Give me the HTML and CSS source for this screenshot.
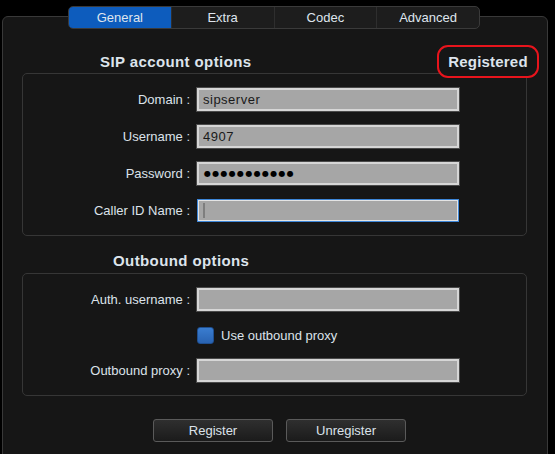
FILE: index.html
```html
<!DOCTYPE html>
<html>
<head>
<meta charset="utf-8">
<link rel="stylesheet" href="styles.css">
</head>
<body>
<div class="app">
  <nav class="tabs">
    <div class="tab active">General</div>
    <div class="tab">Extra</div>
    <div class="tab">Codec</div>
    <div class="tab">Advanced</div>
  </nav>
  <div class="panel">
    <div class="head-row">
      <h2 class="heading sip">SIP account options</h2>
      <div class="status">Registered</div>
    </div>
    <section class="group">
      <div class="row"><label class="lbl">Domain :</label><input class="field" value="sipserver" readonly></div>
      <div class="row"><label class="lbl">Username :</label><input class="field" value="4907" readonly></div>
      <div class="row"><label class="lbl">Password :</label><div class="field dots">●●●●●●●●●●●</div></div>
      <div class="row"><label class="lbl">Caller ID Name :</label><div class="field focus"><span class="caret"></span></div></div>
    </section>
    <h2 class="heading outbound">Outbound options</h2>
    <section class="group">
      <div class="row"><label class="lbl">Auth. username :</label><div class="field"></div></div>
      <div class="row check-row"><span class="lbl"></span><span class="checkbox"></span><span class="check-label">Use outbound proxy</span></div>
      <div class="row"><label class="lbl">Outbound proxy :</label><div class="field"></div></div>
    </section>
    <div class="buttons">
      <button class="btn">Register</button>
      <button class="btn">Unregister</button>
    </div>
  </div>
</div>
</body>
</html>
```

FILE: styles.css
```css
* { box-sizing: border-box; }
html, body { margin: 0; padding: 0; background: #000; }
body {
  width: 555px;
  height: 454px;
  overflow: hidden;
  font-family: "Liberation Sans", Arial, sans-serif;
  color: #dce2ea;
}
.app { padding-top: 6px; }
.tabs {
  position: relative;
  z-index: 2;
  display: flex;
  margin-left: 68px;
  width: 412px;
  height: 23px;
  background: #1d1d1d;
  border: 1px solid #3a3a3a;
  border-radius: 5px;
  overflow: hidden;
}
.tab {
  flex: 1;
  display: flex;
  align-items: center;
  justify-content: center;
  font-size: 13px;
  color: #dfe5ee;
  border-left: 1px solid #2e2e2e;
}
.tab:first-child { border-left: none; }
.tab.active { background: #0d5cbd; }
.panel {
  margin-top: -13px;
  margin-left: 2px;
  width: 546px;
  height: 460px;
  background: #161616;
  border: 1px solid #393939;
  border-radius: 6px;
}
.head-row {
  display: flex;
  justify-content: space-between;
  align-items: flex-start;
  height: 28px;
  margin-top: 28px;
}
.heading {
  margin: 0;
  font-size: 15px;
  font-weight: bold;
  line-height: 18px;
  letter-spacing: 0.4px;
  color: #dde4ec;
}
.heading.sip { margin-top: 8px; margin-left: 97px; }
.status {
  position: relative;
  z-index: 1;
  margin-right: 8px;
  width: 102px;
  height: 33px;
  border: 2px solid #e8141c;
  border-radius: 11px;
  background: #161616;
  font-size: 15px;
  font-weight: bold;
  line-height: 29px;
  letter-spacing: 0.2px;
  text-align: center;
  color: #dde4ec;
}
.group {
  margin-left: 19px;
  width: 505px;
  border: 1px solid #363636;
  border-radius: 5px;
  padding: 14px 0 13px;
  display: flex;
  flex-direction: column;
  gap: 14px;
}
.row { display: flex; align-items: center; height: 23px; }
.lbl {
  width: 167px;
  text-align: right;
  font-size: 13px;
  color: #dce2ea;
  margin-right: 7px;
}
.field {
  width: 262px;
  height: 23px;
  background: #a6a6a6;
  border: 2px solid #d6d6d6;
  box-shadow: 0 0 0 1px #4a4a4a;
  font-family: "Liberation Sans", Arial, sans-serif;
  font-size: 13px;
  letter-spacing: 0.5px;
  color: #1a1a1a;
  padding: 0 4px;
  outline: none;
  display: flex;
  align-items: center;
}
.field.dots {
  font-family: "DejaVu Sans", sans-serif;
  font-size: 8px;
  letter-spacing: 1.3px;
  color: #000;
  padding-left: 5px;
}
.field.focus {
  border: 1px solid #3d86d8;
  box-shadow: inset 0 0 0 1px #e4e4e4;
  padding-left: 5px;
}
.caret {
  width: 2px;
  height: 15px;
  background: #7e7e7e;
}
.heading.outbound {
  margin-left: 110px;
  margin-top: 16px;
  margin-bottom: 3px;
}
.check-row { height: 20px; }
.checkbox {
  width: 17px;
  height: 17px;
  border-radius: 3px;
  background: linear-gradient(#3a7dd0, #2963b2);
  border: 1px solid #1f4f90;
}
.check-label {
  margin-left: 7px;
  font-size: 13px;
  color: #dce2ea;
}
.buttons {
  display: flex;
  gap: 13px;
  margin-left: 150px;
  margin-top: 23px;
}
.btn {
  width: 120px;
  height: 23px;
  padding: 0;
  background: linear-gradient(#2f2f2f, #1b1b1b);
  border: 1px solid #5a5a5a;
  border-radius: 3px;
  font-family: "Liberation Sans", Arial, sans-serif;
  font-size: 13px;
  color: #dce2ea;
}
```
